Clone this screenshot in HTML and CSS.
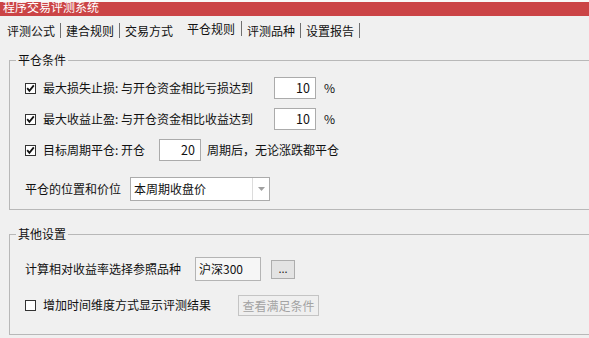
FILE: index.html
```html
<!DOCTYPE html>
<html lang="zh">
<head>
<meta charset="utf-8">
<title>程序交易评测系统</title>
<link rel="stylesheet" href="styles.css">
</head>
<body>
<div class="topstrip"></div>
<div class="titlebar"><span>程序交易评测系统</span></div>
<div class="tabs">
  <span class="tab sep first">评测公式</span>
  <span class="tab sep">建合规则</span>
  <span class="tab">交易方式</span>
  <span class="tab sep active">平仓规则</span>
  <span class="tab sep">评测品种</span>
  <span class="tab sep">设置报告</span>
</div>

<fieldset class="group g1">
  <legend>平仓条件</legend>
  <div class="rows rows1">
    <div class="row">
      <span class="cb"><svg width="9" height="9" viewBox="0 0 9 9"><path d="M1.2 4.2 L3.4 6.8 L7.8 1.4" fill="none" stroke="#111" stroke-width="1.8"/></svg></span>
      <span class="lbl w231">最大损失止损: 与开仓资金相比亏损达到</span>
      <span class="num">10</span>
      <span class="unit">%</span>
    </div>
    <div class="row">
      <span class="cb"><svg width="9" height="9" viewBox="0 0 9 9"><path d="M1.2 4.2 L3.4 6.8 L7.8 1.4" fill="none" stroke="#111" stroke-width="1.8"/></svg></span>
      <span class="lbl w231">最大收益止盈: 与开仓资金相比收益达到</span>
      <span class="num">10</span>
      <span class="unit">%</span>
    </div>
    <div class="row">
      <span class="cb"><svg width="9" height="9" viewBox="0 0 9 9"><path d="M1.2 4.2 L3.4 6.8 L7.8 1.4" fill="none" stroke="#111" stroke-width="1.8"/></svg></span>
      <span class="lbl w116">目标周期平仓: 开仓</span>
      <span class="num">20</span>
      <span class="after">周期后，无论涨跌都平仓</span>
    </div>
    <div class="row row-combo">
      <span class="lbl w105">平仓的位置和价位</span>
      <div class="combo">
        <span class="val">本周期收盘价</span>
        <span class="drop"><svg width="7" height="4" viewBox="0 0 7 4"><path d="M0 0 L7 0 L3.5 4 Z" fill="#a0a0a0"/></svg></span>
      </div>
    </div>
  </div>
</fieldset>

<fieldset class="group g2">
  <legend>其他设置</legend>
  <div class="rows rows2">
    <div class="row row-tall">
      <span class="lbl w170">计算相对收益率选择参照品种</span>
      <span class="ref">沪深300</span>
      <span class="dots">...</span>
    </div>
    <div class="row">
      <span class="cb"></span>
      <span class="lbl w195">增加时间维度方式显示评测结果</span>
      <span class="disabled-btn">查看满足条件</span>
    </div>
  </div>
</fieldset>
</body>
</html>
```

FILE: styles.css
```css
html, body {
  margin: 0;
  padding: 0;
}
body {
  width: 589px;
  height: 338px;
  overflow: hidden;
  background: #f0f0f0;
  font-family: "Noto Sans CJK SC", "Microsoft YaHei", sans-serif;
  font-size: 12px;
  line-height: 1;
  color: #111;
}

.topstrip {
  height: 2px;
  background: #f8f8f8;
}

.titlebar {
  height: 14px;
  background: #cb4446;
  overflow: hidden;
  padding-left: 3px;
  color: #fff;
}
.titlebar span {
  display: block;
  font-size: 12px;
  line-height: 14px;
  margin-top: -2px;
}

.tabs {
  display: flex;
  align-items: center;
  height: 20px;
  margin-top: 4px;
  padding-left: 7px;
}
.tab {
  line-height: 15px;
  padding-right: 5px;
  margin-right: 5px;
  color: #111;
}
.tab.sep {
  border-right: 1px solid #707070;
}
.tab.active {
  margin-left: 4px;
  margin-bottom: 4px;
  padding-right: 6px;
}

.group {
  margin: 13px 0 0 9px;
  padding: 0;
  border: 1px solid #b8b8b8;
  border-right: none;
  min-width: 0;
}
.group legend {
  margin-left: 6px;
  padding: 0 2px;
  font-size: 12px;
  line-height: 14px;
}
.g2 {
  margin-top: 17px;
}

.rows {
  display: flex;
  flex-direction: column;
  padding-left: 15px;
}
.rows1 {
  padding-top: 10px;
  padding-bottom: 8px;
  gap: 9px;
}
.rows2 {
  padding-top: 16px;
  padding-bottom: 18px;
  gap: 13px;
}

.row {
  display: flex;
  align-items: center;
  height: 22px;
}
.row-combo {
  height: 24px;
  margin-top: 7px;
}
.row-tall {
  height: 24px;
}

.cb {
  box-sizing: border-box;
  width: 11px;
  height: 11px;
  border: 1px solid #333;
  background: #fff;
  margin-right: 7px;
  display: flex;
  align-items: center;
  justify-content: center;
  flex: none;
}
.cb svg {
  display: block;
}

.lbl {
  flex: none;
  white-space: nowrap;
}
.w231 { width: 231px; }
.w116 { width: 116px; }
.w105 { width: 105px; }
.w170 { width: 170px; }
.w195 { width: 195px; }

.num {
  box-sizing: border-box;
  width: 42px;
  height: 22px;
  border: 1px solid #ababab;
  background: #fff;
  text-align: right;
  padding-right: 5px;
  line-height: 20px;
  font-size: 12.5px;
  flex: none;
}
.unit {
  margin-left: 8px;
}
.after {
  margin-left: 6px;
}

.combo {
  box-sizing: border-box;
  display: flex;
  width: 140px;
  height: 24px;
  border: 1px solid #ababab;
  background: #fff;
}
.combo .val {
  flex: 1;
  padding-left: 3px;
  line-height: 22px;
}
.combo .drop {
  width: 16px;
  border-left: 1px solid #dcdcdc;
  display: flex;
  align-items: center;
  justify-content: center;
}

.ref {
  box-sizing: border-box;
  width: 66px;
  height: 24px;
  border: 1px solid #b4b4b4;
  background: #f6f6f6;
  padding-left: 3px;
  line-height: 22px;
}
.dots {
  box-sizing: border-box;
  width: 24px;
  height: 19px;
  margin-left: 10px;
  border: 1px solid #adadad;
  background: #e3e3e3;
  text-align: center;
  line-height: 14px;
  font-size: 11px;
  color: #222;
}

.disabled-btn {
  box-sizing: border-box;
  width: 81px;
  height: 21px;
  border: 1px solid #c4c4c4;
  background: #efefef;
  color: #a3a3a3;
  text-align: center;
  line-height: 19px;
}
```
